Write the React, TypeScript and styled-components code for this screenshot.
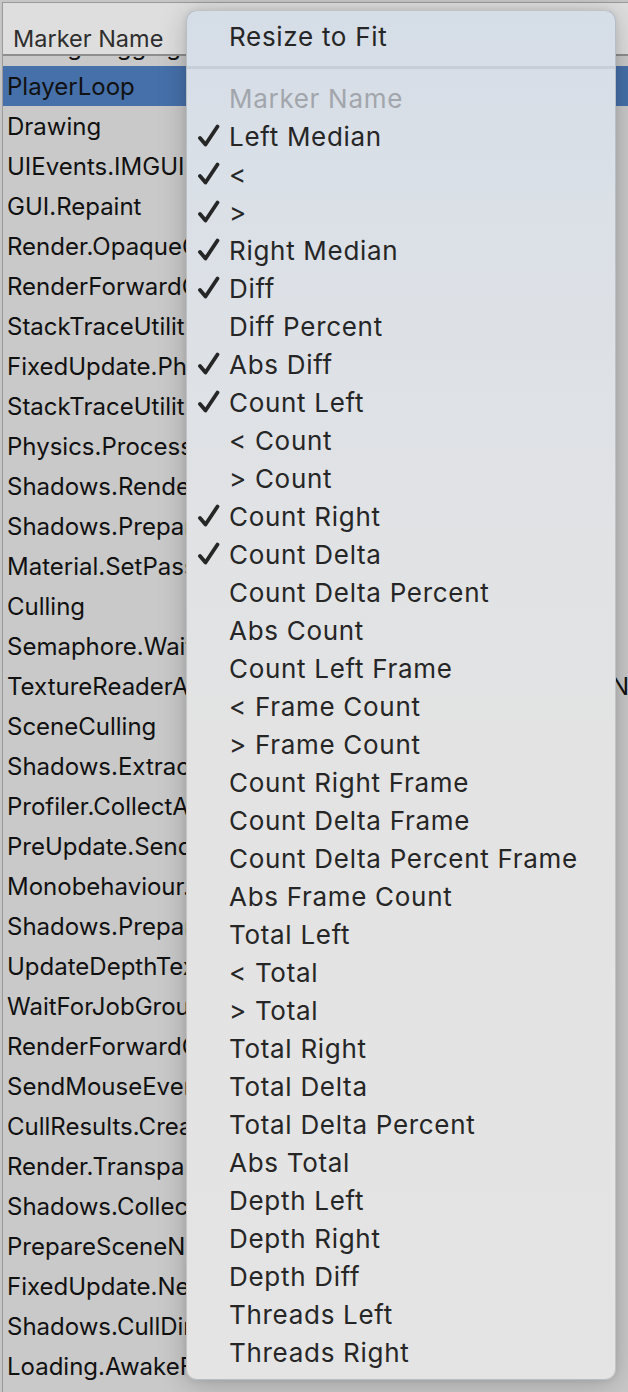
import React from "react";
import styled, { createGlobalStyle } from "styled-components";

const Global = createGlobalStyle`
  html, body { margin: 0; padding: 0; background: #c6c6c6; overflow: hidden; }
  body { font-family: Inter, "Noto Sans", "Liberation Sans", sans-serif; }
`;

const Screen = styled.div`
  position: relative;
  width: 628px;
  height: 1392px;
  overflow: hidden;
  background: #c6c6c6;
  padding: 2px 0 0 2px;
  box-sizing: border-box;
`;

const Table = styled.div`
  display: flex;
  flex-direction: column;
  height: 100%;
  border-top: 1px solid #9a9a9a;
  border-left: 1px solid #9a9a9a;
  background: #c9c9c9;
`;

const Header = styled.div`
  flex: none;
  height: 53px;
  box-sizing: border-box;
  display: flex;
  align-items: center;
  padding: 20px 0 0 10px;
  background: #dedede;
  border-bottom: 2px solid #8e8e8e;
  font-size: 23.5px;
  color: #2e2e2e;
`;

const List = styled.div`
  flex: 1;
  overflow: hidden;
`;

const Rows = styled.div`
  margin-top: -30px;
`;

const Row = styled.div<{ $selected?: boolean }>`
  height: 40px;
  display: grid;
  grid-template-columns: 608px 1fr;
  align-items: center;
  background: ${(p) => (p.$selected ? "#4670aa" : "transparent")};
  font-size: 24px;
  color: #111;
  white-space: nowrap;
`;

const NameCell = styled.span`
  padding-left: 4px;
  overflow: hidden;
`;

const ExtraCell = styled.span`
  overflow: hidden;
`;

const Menu = styled.div`
  position: absolute;
  left: 186px;
  top: 10px;
  width: 430px;
  height: 1370px;
  box-sizing: border-box;
  padding-top: 6px;
  border-radius: 11px;
  border: 1px solid rgba(0, 0, 0, 0.14);
  background: linear-gradient(
    to bottom,
    #d5dde7 0%,
    #dae0e7 12%,
    #e0e2e5 35%,
    #e3e3e3 55%,
    #e4e4e4 100%
  );
  box-shadow: 0 4px 28px rgba(0, 0, 0, 0.22), 0 0 6px rgba(0, 0, 0, 0.08);
  display: flex;
  flex-direction: column;
`;

const Item = styled.div<{ $disabled?: boolean }>`
  height: 38px;
  flex: none;
  display: grid;
  grid-template-columns: 42px 1fr;
  align-items: center;
  font-size: 26px;
  letter-spacing: 0.7px;
  color: ${(p) => (p.$disabled ? "#a2a6ac" : "#262626")};
  white-space: nowrap;
`;

const CheckSlot = styled.span`
  display: flex;
  align-items: center;
  padding-left: 10px;
`;

const Separator = styled.div`
  flex: none;
  height: 3px;
  margin: 11px 0 10px;
  background: #c6ced8;
`;

const Check = () => (
  <svg width="24" height="24" viewBox="0 0 24 24">
    <path
      d="M3 14 L8.5 20.5 L20.5 2.5"
      fill="none"
      stroke="#262626"
      strokeWidth="3.8"
      strokeLinecap="round"
      strokeLinejoin="round"
    />
  </svg>
);

const rows: { name: string; extra?: string; selected?: boolean }[] = [
  { name: "Debug.Logging" },
  { name: "PlayerLoop", selected: true },
  { name: "Drawing" },
  { name: "UIEvents.IMGUIRenderOverlays" },
  { name: "GUI.Repaint" },
  { name: "Render.OpaqueGeometry" },
  { name: "RenderForwardOpaque.Render" },
  { name: "StackTraceUtility.ExtractStackTrace" },
  { name: "FixedUpdate.PhysicsFixedUpdate" },
  { name: "StackTraceUtility.PostprocessStacktrace" },
  { name: "Physics.Processing" },
  { name: "Shadows.RenderShadowMap" },
  { name: "Shadows.PrepareShadowmap" },
  { name: "Material.SetPassFast" },
  { name: "Culling" },
  { name: "Semaphore.WaitForSignal" },
  { name: "TextureReaderAsync.Wait", extra: "New" },
  { name: "SceneCulling" },
  { name: "Shadows.ExtractCasters" },
  { name: "Profiler.CollectAudioStats" },
  { name: "PreUpdate.SendMouseEvents" },
  { name: "Monobehaviour.OnMouse_" },
  { name: "Shadows.PrepareCasters" },
  { name: "UpdateDepthTexture" },
  { name: "WaitForJobGroupID" },
  { name: "RenderForwardOpaque.Prepare" },
  { name: "SendMouseEvents" },
  { name: "CullResults.CreateSharedRendererScene" },
  { name: "Render.TransparentGeometry" },
  { name: "Shadows.CollectShadowCasters" },
  { name: "PrepareSceneNodes" },
  { name: "FixedUpdate.NewInputFixedUpdate" },
  { name: "Shadows.CullDirectional" },
  { name: "Loading.AwakeFromLoad" },
];

const items: { label: string; checked?: boolean; disabled?: boolean }[] = [
  { label: "Marker Name", disabled: true },
  { label: "Left Median", checked: true },
  { label: "<", checked: true },
  { label: ">", checked: true },
  { label: "Right Median", checked: true },
  { label: "Diff", checked: true },
  { label: "Diff Percent" },
  { label: "Abs Diff", checked: true },
  { label: "Count Left", checked: true },
  { label: "< Count" },
  { label: "> Count" },
  { label: "Count Right", checked: true },
  { label: "Count Delta", checked: true },
  { label: "Count Delta Percent" },
  { label: "Abs Count" },
  { label: "Count Left Frame" },
  { label: "< Frame Count" },
  { label: "> Frame Count" },
  { label: "Count Right Frame" },
  { label: "Count Delta Frame" },
  { label: "Count Delta Percent Frame" },
  { label: "Abs Frame Count" },
  { label: "Total Left" },
  { label: "< Total" },
  { label: "> Total" },
  { label: "Total Right" },
  { label: "Total Delta" },
  { label: "Total Delta Percent" },
  { label: "Abs Total" },
  { label: "Depth Left" },
  { label: "Depth Right" },
  { label: "Depth Diff" },
  { label: "Threads Left" },
  { label: "Threads Right" },
];

export default function App() {
  return (
    <>
      <Global />
      <Screen>
        <Table>
          <Header>Marker Name</Header>
          <List>
            <Rows>
              {rows.map((r, i) => (
                <Row key={i} $selected={r.selected}>
                  <NameCell>{r.name}</NameCell>
                  <ExtraCell>{r.extra ?? ""}</ExtraCell>
                </Row>
              ))}
            </Rows>
          </List>
        </Table>
        <Menu>
          <Item>
            <CheckSlot />
            <span>Resize to Fit</span>
          </Item>
          <Separator />
          {items.map((it) => (
            <Item key={it.label} $disabled={it.disabled}>
              <CheckSlot>{it.checked ? <Check /> : null}</CheckSlot>
              <span>{it.label}</span>
            </Item>
          ))}
        </Menu>
      </Screen>
    </>
  );
}
